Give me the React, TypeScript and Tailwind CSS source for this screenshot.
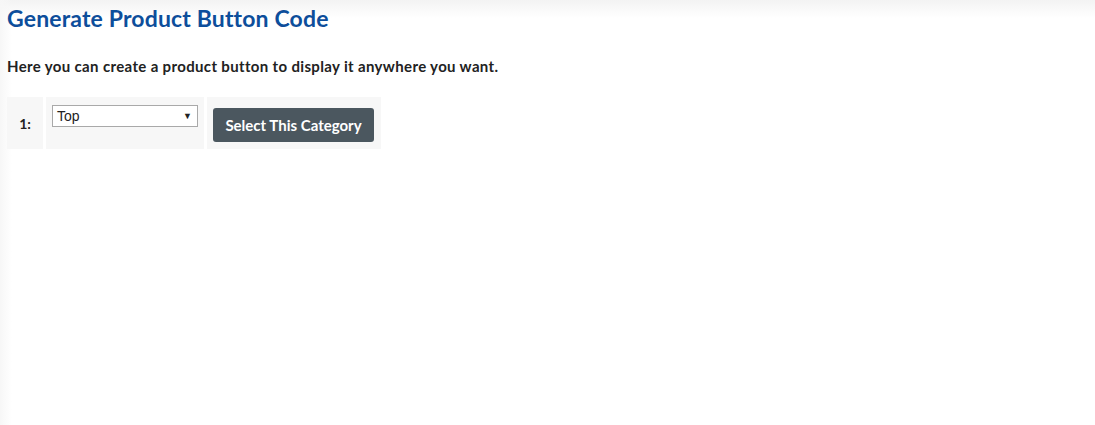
import React from 'react';

const App: React.FC = () => {
  return (
    <div className="min-h-[425px] w-full bg-white relative font-['Lato','Liberation_Sans',sans-serif]">
      {/* soft edge shading */}
      <div className="absolute top-0 left-0 right-0 h-[18px] bg-gradient-to-b from-[#f3f3f3] to-white pointer-events-none" />
      <div className="absolute top-0 left-0 bottom-0 w-[12px] bg-gradient-to-r from-[#f7f7f7] to-transparent pointer-events-none" />

      <div className="relative px-[7px] pt-[4px]">
        <h1 className="text-[23px] leading-[28px] tracking-[0.15px] font-bold text-[#0d4e9b]">Generate Product Button Code</h1>
        <p className="mt-[25px] text-[15px] leading-[18px] tracking-[0.35px] font-bold text-[#222]">
          Here you can create a product button to display it anywhere you want.
        </p>

        <table className="mt-[19px] border-separate border-spacing-[3px] -ml-[3px]">
          <tbody>
            <tr>
              <td className="bg-[#f7f7f7] w-[36px] h-[52px] text-center text-[14px] font-bold text-[#222] align-middle">1:</td>
              <td className="bg-[#f7f7f7] w-[158px] align-top pt-[8px] pl-[6px]">
                <div className="relative w-[146px] h-[22px] border border-[#a9a9a9] bg-white">
                  <span className="absolute left-[4px] top-[2px] text-[14px] leading-[16px] text-[#222] font-['Liberation_Sans',sans-serif]">Top</span>
                  <span className="absolute right-[5px] top-[3px] text-[9px] text-[#222]">▼</span>
                </div>
              </td>
              <td className="bg-[#f7f7f7] w-[174px] px-[6px] pt-[11px] pb-[7px] align-top">
                <button className="h-[34px] w-[161px] rounded-[3px] bg-[#4b575f] text-white text-[15px] font-bold">
                  Select This Category
                </button>
              </td>
            </tr>
          </tbody>
        </table>
      </div>
    </div>
  );
};

export default App;
